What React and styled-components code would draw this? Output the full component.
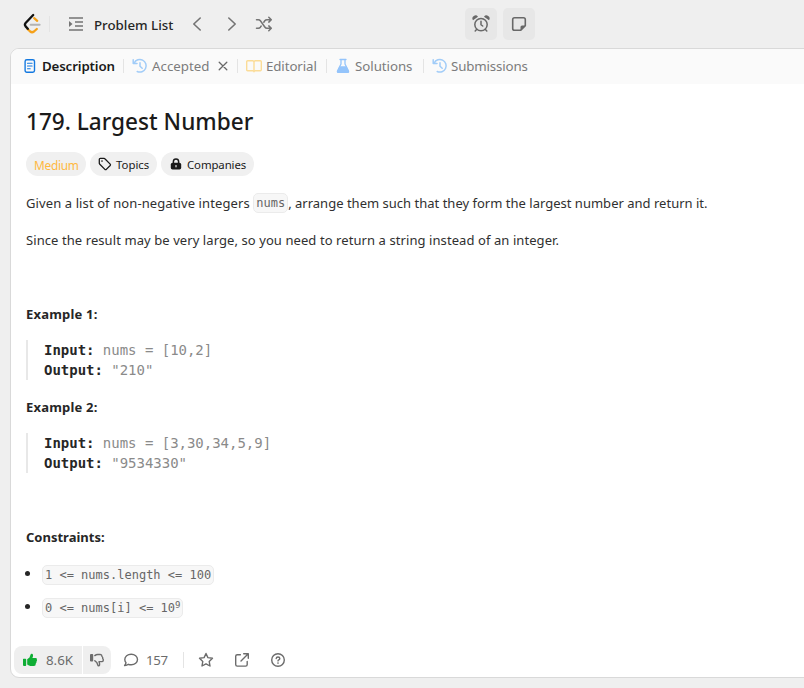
import React from "react";
import styled, { createGlobalStyle } from "styled-components";

const Global = createGlobalStyle`
  * { box-sizing: border-box; }
  body { margin: 0; background: #efefef; font-family: "Noto Sans", "Open Sans", sans-serif; color: #303030; overflow: hidden; }
  h1, p, ul, pre { margin: 0; padding: 0; }
`;

const Page = styled.div`
  width: 804px;
  height: 688px;
  overflow: hidden;
  display: flex;
  flex-direction: column;
`;

const TopBar = styled.header`
  height: 48px;
  flex: none;
  display: flex;
  align-items: center;
  padding-left: 22px;
  color: #747474;
`;

const Slot = styled.div`
  width: ${(p) => p.$w}px;
  flex: none;
  display: flex;
  align-items: center;
`;

const Divider = styled.div`
  width: 1px;
  height: ${(p) => p.$h || 14}px;
  margin-right: ${(p) => p.$gap || 0}px;
  flex: none;
  background: #e4e4e4;
`;

const Label = styled.span`
  white-space: nowrap;
  font-size: ${(p) => p.$size || 13.3}px;
  font-weight: ${(p) => p.$weight || 400};
  letter-spacing: ${(p) => p.$ls || 0}px;
  color: ${(p) => p.$color || "inherit"};
  line-height: 20px;
  padding-top: ${(p) => p.$drop || 0}px;
`;

const ToolButton = styled.button`
  width: 32px;
  height: 32px;
  margin-right: 6px;
  padding: 0;
  border: 0;
  border-radius: 5px;
  background: #e7e7e7;
  color: #686868;
  display: flex;
  align-items: center;
  justify-content: center;
`;

const Panel = styled.main`
  width: 810px;
  height: 630px;
  flex: none;
  margin-left: 10px;
  border: 1px solid #d9d9d9;
  border-radius: 9px;
  background: #fff;
  overflow: hidden;
  display: flex;
  flex-direction: column;
`;

const Tabs = styled.nav`
  height: 35px;
  flex: none;
  display: flex;
  align-items: center;
  padding: 0 0 2px 13px;
  background: #fafafa;
  color: #7c7c7c;
`;

const Icon = styled.svg`
  display: block;
  flex: none;
  width: ${(p) => p.$w}px;
  height: ${(p) => p.$h || p.$w}px;
  margin-right: ${(p) => p.$gap || 0}px;
  color: ${(p) => p.$color || "inherit"};
  fill: none;
  stroke: currentColor;
  stroke-width: ${(p) => p.$sw || 1.4};
  stroke-linecap: round;
  stroke-linejoin: round;
`;

const Content = styled.section`
  flex: 1;
  display: flex;
  flex-direction: column;
  padding: 20px 0 0 15px;
`;

const Title = styled.h1`
  font-size: 22.6px;
  line-height: 36px;
  font-weight: 500;
  color: #1a1a1a;
`;

const Chips = styled.div`
  display: flex;
  gap: 4px;
  margin-top: 12px;
`;

const Chip = styled.div`
  width: ${(p) => p.$w}px;
  height: 24px;
  padding-left: 8px;
  border-radius: 12px;
  background: #f0f0f0;
  color: ${(p) => p.$color || "#1a1a1a"};
  display: flex;
  align-items: center;
`;

const Paragraph = styled.p`
  height: 20px;
  margin-top: ${(p) => p.$top}px;
  font-size: 13px;
  line-height: 20px;
  letter-spacing: ${(p) => p.$ls || 0}px;
  font-weight: ${(p) => p.$weight || 400};
  color: ${(p) => (p.$weight ? "#262626" : "inherit")};
  white-space: nowrap;
`;

const Lead = styled.span`
  letter-spacing: 0.1px;
`;

const Code = styled.code`
  display: inline-block;
  height: 20px;
  padding: 0 2px;
  border: 1px solid #ebebeb;
  border-radius: 5px;
  background: #f7f7f7;
  color: #666;
  font: 12px/18px "DejaVu Sans Mono", monospace;
  letter-spacing: 0;
  vertical-align: top;
  white-space: pre;
`;

const Sup = styled.sup`
  font-size: 9px;
  line-height: 0;
  vertical-align: 4px;
`;

const Sample = styled.pre`
  height: 40px;
  margin-top: 16px;
  padding-left: 16px;
  border-left: 2px solid #e8e8e8;
  color: #8a8a8a;
  font: 14px/20px "DejaVu Sans Mono", monospace;
  letter-spacing: -0.02px;

  b { color: #262626; }
`;

const Limits = styled.ul`
  margin-top: 18px;
  display: flex;
  flex-direction: column;
  gap: 13px;
  list-style: none;
`;

const Limit = styled.li`
  display: flex;
  align-items: center;
  height: 20px;

  &::before {
    content: "";
    width: 5px;
    height: 5px;
    margin: -3px 12px 0 -1px;
    border-radius: 50%;
    background: #262626;
  }
`;

const Footer = styled.footer`
  height: 31px;
  flex: none;
  display: flex;
  align-items: flex-start;
  padding-left: 3px;
  color: #6c6c6c;
`;

const Votes = styled.div`
  display: flex;
  gap: 1px;
  width: 97px;
  height: 28px;
  margin-right: 12px;
  border-radius: 8px;
  overflow: hidden;
`;

const Vote = styled.button`
  width: ${(p) => p.$w}px;
  padding: 0 0 0 ${(p) => p.$inset}px;
  border: 0;
  background: #efefef;
  color: inherit;
  font-family: inherit;
  display: flex;
  align-items: center;
`;

const Actions = styled.div`
  display: flex;
  align-items: center;
  height: 28px;
`;

const Logo = () => (
  <Icon viewBox="0 0 20 22" $w={20} $h={22} $sw={2.3}>
    <path d="M12.2 5.2 15.2 7.8M5.4 15.8 8.2 18.5Q10 19.9 12 18.5L14.8 16" stroke="#f5a11a" />
    <path d="M11.2 2 3.6 10Q2.2 11.6 3.6 13.4L5.8 15.8" stroke="#111" />
    <path d="M8.6 11.8H17.6" stroke="#b3b3b3" strokeWidth="2" />
  </Icon>
);

const ListIcon = () => (
  <Icon viewBox="0 0 16 16" $w={16} $gap={10} $sw={1.6}>
    <path d="M1 2H15M7 6H15M7 10H15M1 14H15" strokeLinecap="butt" />
    <path d="M1 4.9 4.5 8 1 11.1Z" fill="currentColor" stroke="none" />
  </Icon>
);

const Chevron = ({ right }) => (
  <Icon viewBox="0 0 10 16" $w={10} $h={16} $sw={1.6}>
    <path d={right ? "M1.8 2 8.2 8 1.8 14" : "M8.2 2 1.8 8 8.2 14"} />
  </Icon>
);

const ShuffleIcon = () => (
  <Icon viewBox="0 0 18 16" $w={18} $h={16} $sw={1.5}>
    <path d="M1.5 3.7H3.3Q4.6 3.7 5.4 4.8L9.8 11Q10.7 12.3 12 12.3H16M1.5 12.3H3.3Q4.6 12.3 5.4 11.2L6.2 10M8.8 6.2 9.8 4.8Q10.6 3.7 12 3.7H16M13.8 1.3 16.3 3.7 13.8 6.1M13.8 9.9 16.3 12.3 13.8 14.7" />
  </Icon>
);

const AlarmIcon = () => (
  <Icon viewBox="0 0 18 18" $w={18} $sw={1.5}>
    <circle cx="9" cy="9.6" r="6.2" />
    <path d="M9 6.3V9.7L10.7 11M4.8 14.3 3.2 16M13.2 14.3 14.8 16" />
    <path d="M1 5.2A3 3 0 0 1 6 1.8ZM17 5.2A3 3 0 0 0 12 1.8Z" fill="currentColor" stroke="none" />
  </Icon>
);

const NoteIcon = () => (
  <Icon viewBox="0 0 16 16" $w={16} $sw={1.6}>
    <path d="M3.5 1.7H12.5Q14.3 1.7 14.3 3.5V9.8L9.8 14.3H3.5Q1.7 14.3 1.7 12.5V3.5Q1.7 1.7 3.5 1.7Z" />
    <path d="M9.5 14.5V11Q9.5 9.5 11 9.5H14.5Z" fill="currentColor" stroke="none" />
  </Icon>
);

const DocIcon = () => (
  <Icon viewBox="0 0 12 16" $w={12} $h={16} $gap={6} $color="#1479e0" $sw={1.4}>
    <rect x="1.1" y="1.7" width="9.4" height="12.6" rx="1.7" />
    <path d="M3.5 5.2H8.1M3.5 8H8.1M3.5 10.8H6.2" strokeWidth="1.1" />
  </Icon>
);

const HistoryIcon = ({ gap }) => (
  <Icon viewBox="0 0 16 16" $w={16} $gap={gap} $color="#a1ccf8" $sw={1.5}>
    <path d="M2.2 5A6.3 6.3 0 1 1 5.2 13.5M1.2 1.8V5.5H5M8 4.7V8.3L10.2 10.3" />
  </Icon>
);

const BookIcon = () => (
  <Icon viewBox="0 0 18 14" $w={18} $h={14} $gap={3} $color="#fbdc98" $sw={1.4}>
    <path d="M2.7 1.7H7.6Q9 1.7 9 3Q9 1.7 10.4 1.7H15.3Q16.3 1.7 16.3 2.7V10.7Q16.3 11.7 15.3 11.7H10.4Q9 11.7 9 12.7Q9 11.7 7.6 11.7H2.7Q1.7 11.7 1.7 10.7V2.7Q1.7 1.7 2.7 1.7ZM9 3V12.5" />
  </Icon>
);

const FlaskIcon = () => (
  <Icon viewBox="0 0 14 16" $w={14} $h={16} $gap={5} $color="#94c4fb" $sw={1.3}>
    <path d="M4 1.5H10M5 1.7V6L1.6 12.8Q1 14.4 2.5 14.4H11.5Q13 14.4 12.4 12.8L9 6V1.7" />
    <path d="M3.8 9H10.2L12.5 14H1.5Z" fill="currentColor" />
  </Icon>
);

const CloseIcon = () => (
  <Icon viewBox="0 0 10 10" $w={10} $color="#686868" $sw={1.3}>
    <path d="M1.2 1.2 8.8 8.8M8.8 1.2 1.2 8.8" />
  </Icon>
);

const TagIcon = () => (
  <Icon viewBox="0 0 14 14" $w={14} $gap={4} $sw={1.3}>
    <path d="M1.3 2.3V6.2Q1.3 6.8 1.8 7.3L6.9 12.4Q7.6 13 8.3 12.4L12.2 8.5Q12.8 7.8 12.2 7.1L7.1 2Q6.6 1.4 6 1.4H2.3Q1.3 1.4 1.3 2.3Z" />
    <circle cx="4" cy="4.1" r=".8" fill="currentColor" stroke="none" />
  </Icon>
);

const LockIcon = () => (
  <Icon viewBox="0 0 14 14" $w={14} $gap={4} $sw={1.5}>
    <path d="M4.4 6V4.6A2.6 2.6 0 0 1 9.6 4.6V6" />
    <path d="M3.5 5.7H10.5Q12.2 5.7 12.2 7.4V10.8Q12.2 12.6 10.5 12.6H3.5Q1.8 12.6 1.8 10.8V7.4Q1.8 5.7 3.5 5.7Z" fill="currentColor" stroke="none" />
    <path d="M7 8.6V9.8" stroke="#eee" strokeWidth="1.2" />
  </Icon>
);

const LikeIcon = () => (
  <Icon viewBox="0 0 16 16" $w={16} $gap={8} $color="#0fae35">
    <path d="M1.5 6.7H3.5Q4.2 6.7 4.2 7.4V13Q4.2 13.9 3.5 13.9H2Q1 13.9 1 13V7.4Q1 6.7 1.5 6.7ZM5.2 7.3 7.5 5.4 8.4 2.9Q8.9 1.3 10.2 1.8Q11.5 2.5 11 4.3L10.4 6H13.8Q15.4 6.3 14.9 7.7 15.3 8.7 14.5 9.5 14.7 10.7 13.8 11.4 13.9 13.9 11.9 13.9H8.5Q7 13.9 5.2 12.6Z" fill="currentColor" stroke="none" />
  </Icon>
);

const DislikeIcon = () => (
  <Icon viewBox="0 0 16 16" $w={16} $sw={1.4}>
    <path d="M1 3Q1 2.1 2 2.1H3.3Q4.2 2.1 4.2 3V8.8Q4.2 9.6 3.3 9.6H2Q1 9.6 1 8.8Z" fill="currentColor" stroke="none" />
    <path d="M5.8 3.6Q7.2 2.5 8.7 2.5H11.3Q12.9 2.5 13 4.5 14 5.2 13.7 6.4 14.6 7.2 14.2 8 14.5 9.5 13 9.6H10L10.6 11.9Q10.8 13.4 9.9 13.8 9 14 8.7 12.8L7.8 10.6 5.8 8.8" />
  </Icon>
);

const CommentIcon = () => (
  <Icon viewBox="0 0 16 16" $w={16} $gap={7} $sw={1.4}>
    <path d="M8.2 2.3C4.5 2.3 1.8 4.5 1.8 7.5Q1.8 9.3 3 10.7 2.8 12.3 1.6 13.5 3.8 13.6 5.4 12.3 6.7 12.8 8.2 12.8C11.8 12.8 14.5 10.5 14.5 7.5S11.8 2.3 8.2 2.3Z" />
  </Icon>
);

const StarIcon = () => (
  <Icon viewBox="0 0 16 16" $w={16} $sw={1.4}>
    <path d="M8 1.5 9.9 5.6 14.5 6.2 11.2 9.4 12 14 8 11.8 4 14 4.8 9.4 1.5 6.2 6.1 5.6Z" />
  </Icon>
);

const ShareIcon = () => (
  <Icon viewBox="0 0 16 16" $w={16} $sw={1.4}>
    <path d="M6.4 2.7H3.3Q1.7 2.7 1.7 4.3V12.5Q1.7 14.1 3.3 14.1H11.6Q13.2 14.1 13.2 12.5V9.4M9.7 1.7H14.3V6.3M14 2 7 9" />
  </Icon>
);

const HelpIcon = () => (
  <Icon viewBox="0 0 16 16" $w={16} $sw={1.4}>
    <circle cx="8" cy="8" r="6.3" />
    <path d="M6.2 6.5Q6.3 5 8 5 9.8 5 9.8 6.4 9.8 7.3 8.7 7.9 8 8.2 8 8.9" />
    <circle cx="8" cy="11" r=".85" fill="currentColor" stroke="none" />
  </Icon>
);

export default function App() {
  return (
    <Page>
      <Global />
      <TopBar>
        <Slot $w={27}><Logo /></Slot>
        <Divider $h={16} $gap={18} />
        <Slot $w={124}>
          <ListIcon />
          <Label $weight={500} $color="#262626" $drop={2}>Problem List</Label>
        </Slot>
        <Slot $w={35}><Chevron /></Slot>
        <Slot $w={28}><Chevron right /></Slot>
        <Slot $w={210}><ShuffleIcon /></Slot>
        <ToolButton aria-label="Timer"><AlarmIcon /></ToolButton>
        <ToolButton aria-label="Notes"><NoteIcon /></ToolButton>
      </TopBar>
      <Panel>
        <Tabs>
          <Slot $w={99}><DocIcon /><Label $weight={600} $color="#1a1a1a" $ls={-0.15}>Description</Label></Slot>
          <Divider $gap={8} />
          <Slot $w={86}><HistoryIcon gap={4} /><Label>Accepted</Label></Slot>
          <Slot $w={19}><CloseIcon /></Slot>
          <Divider $gap={7} />
          <Slot $w={81}><BookIcon /><Label $ls={-0.1}>Editorial</Label></Slot>
          <Divider $gap={9} />
          <Slot $w={87}><FlaskIcon /><Label $ls={-0.05}>Solutions</Label></Slot>
          <Divider $gap={8} />
          <Slot $w={110}><HistoryIcon gap={3} /><Label $ls={-0.15}>Submissions</Label></Slot>
        </Tabs>
        <Content>
          <Title>179. Largest Number</Title>
          <Chips>
            <Chip $w={60} $color="#ffb83f"><Label $size={11.9} $ls={-0.3} $drop={2}>Medium</Label></Chip>
            <Chip $w={67}><TagIcon /><Label $size={11.4} $drop={2}>Topics</Label></Chip>
            <Chip $w={93}><LockIcon /><Label $size={11.4} $ls={-0.1} $drop={2}>Companies</Label></Chip>
          </Chips>
          <Paragraph $top={17} $ls={0.01}>
            <Lead>Given a list of non-negative integers </Lead><Code>nums</Code>, arrange them such that they form the largest number and return it.
          </Paragraph>
          <Paragraph $top={17} $ls={0.08}>Since the result may be very large, so you need to return a string instead of an integer.</Paragraph>
          <Paragraph $top={54} $weight={700} $ls={0.2}>Example 1:</Paragraph>
          <Sample><b>Input:</b>{" nums = [10,2]\n"}<b>Output:</b>{' "210"'}</Sample>
          <Paragraph $top={17} $weight={700} $ls={0.2}>Example 2:</Paragraph>
          <Sample><b>Input:</b>{" nums = [3,30,34,5,9]\n"}<b>Output:</b>{' "9534330"'}</Sample>
          <Paragraph $top={54} $weight={700}>Constraints:</Paragraph>
          <Limits>
            <Limit><Code>{"1 <= nums.length <= 100"}</Code></Limit>
            <Limit><Code>{"0 <= nums[i] <= 10"}<Sup>9</Sup></Code></Limit>
          </Limits>
        </Content>
        <Footer>
          <Votes>
            <Vote $w={68} $inset={8}><LikeIcon /><Label>8.6K</Label></Vote>
            <Vote $w={28} $inset={6} aria-label="Dislike"><DislikeIcon /></Vote>
          </Votes>
          <Actions>
            <Slot $w={60}><CommentIcon /><Label $ls={-0.3}>157</Label></Slot>
            <Divider $h={16} $gap={14} />
            <Slot $w={36}><StarIcon /></Slot>
            <Slot $w={36}><ShareIcon /></Slot>
            <Slot $w={16}><HelpIcon /></Slot>
          </Actions>
        </Footer>
      </Panel>
    </Page>
  );
}
